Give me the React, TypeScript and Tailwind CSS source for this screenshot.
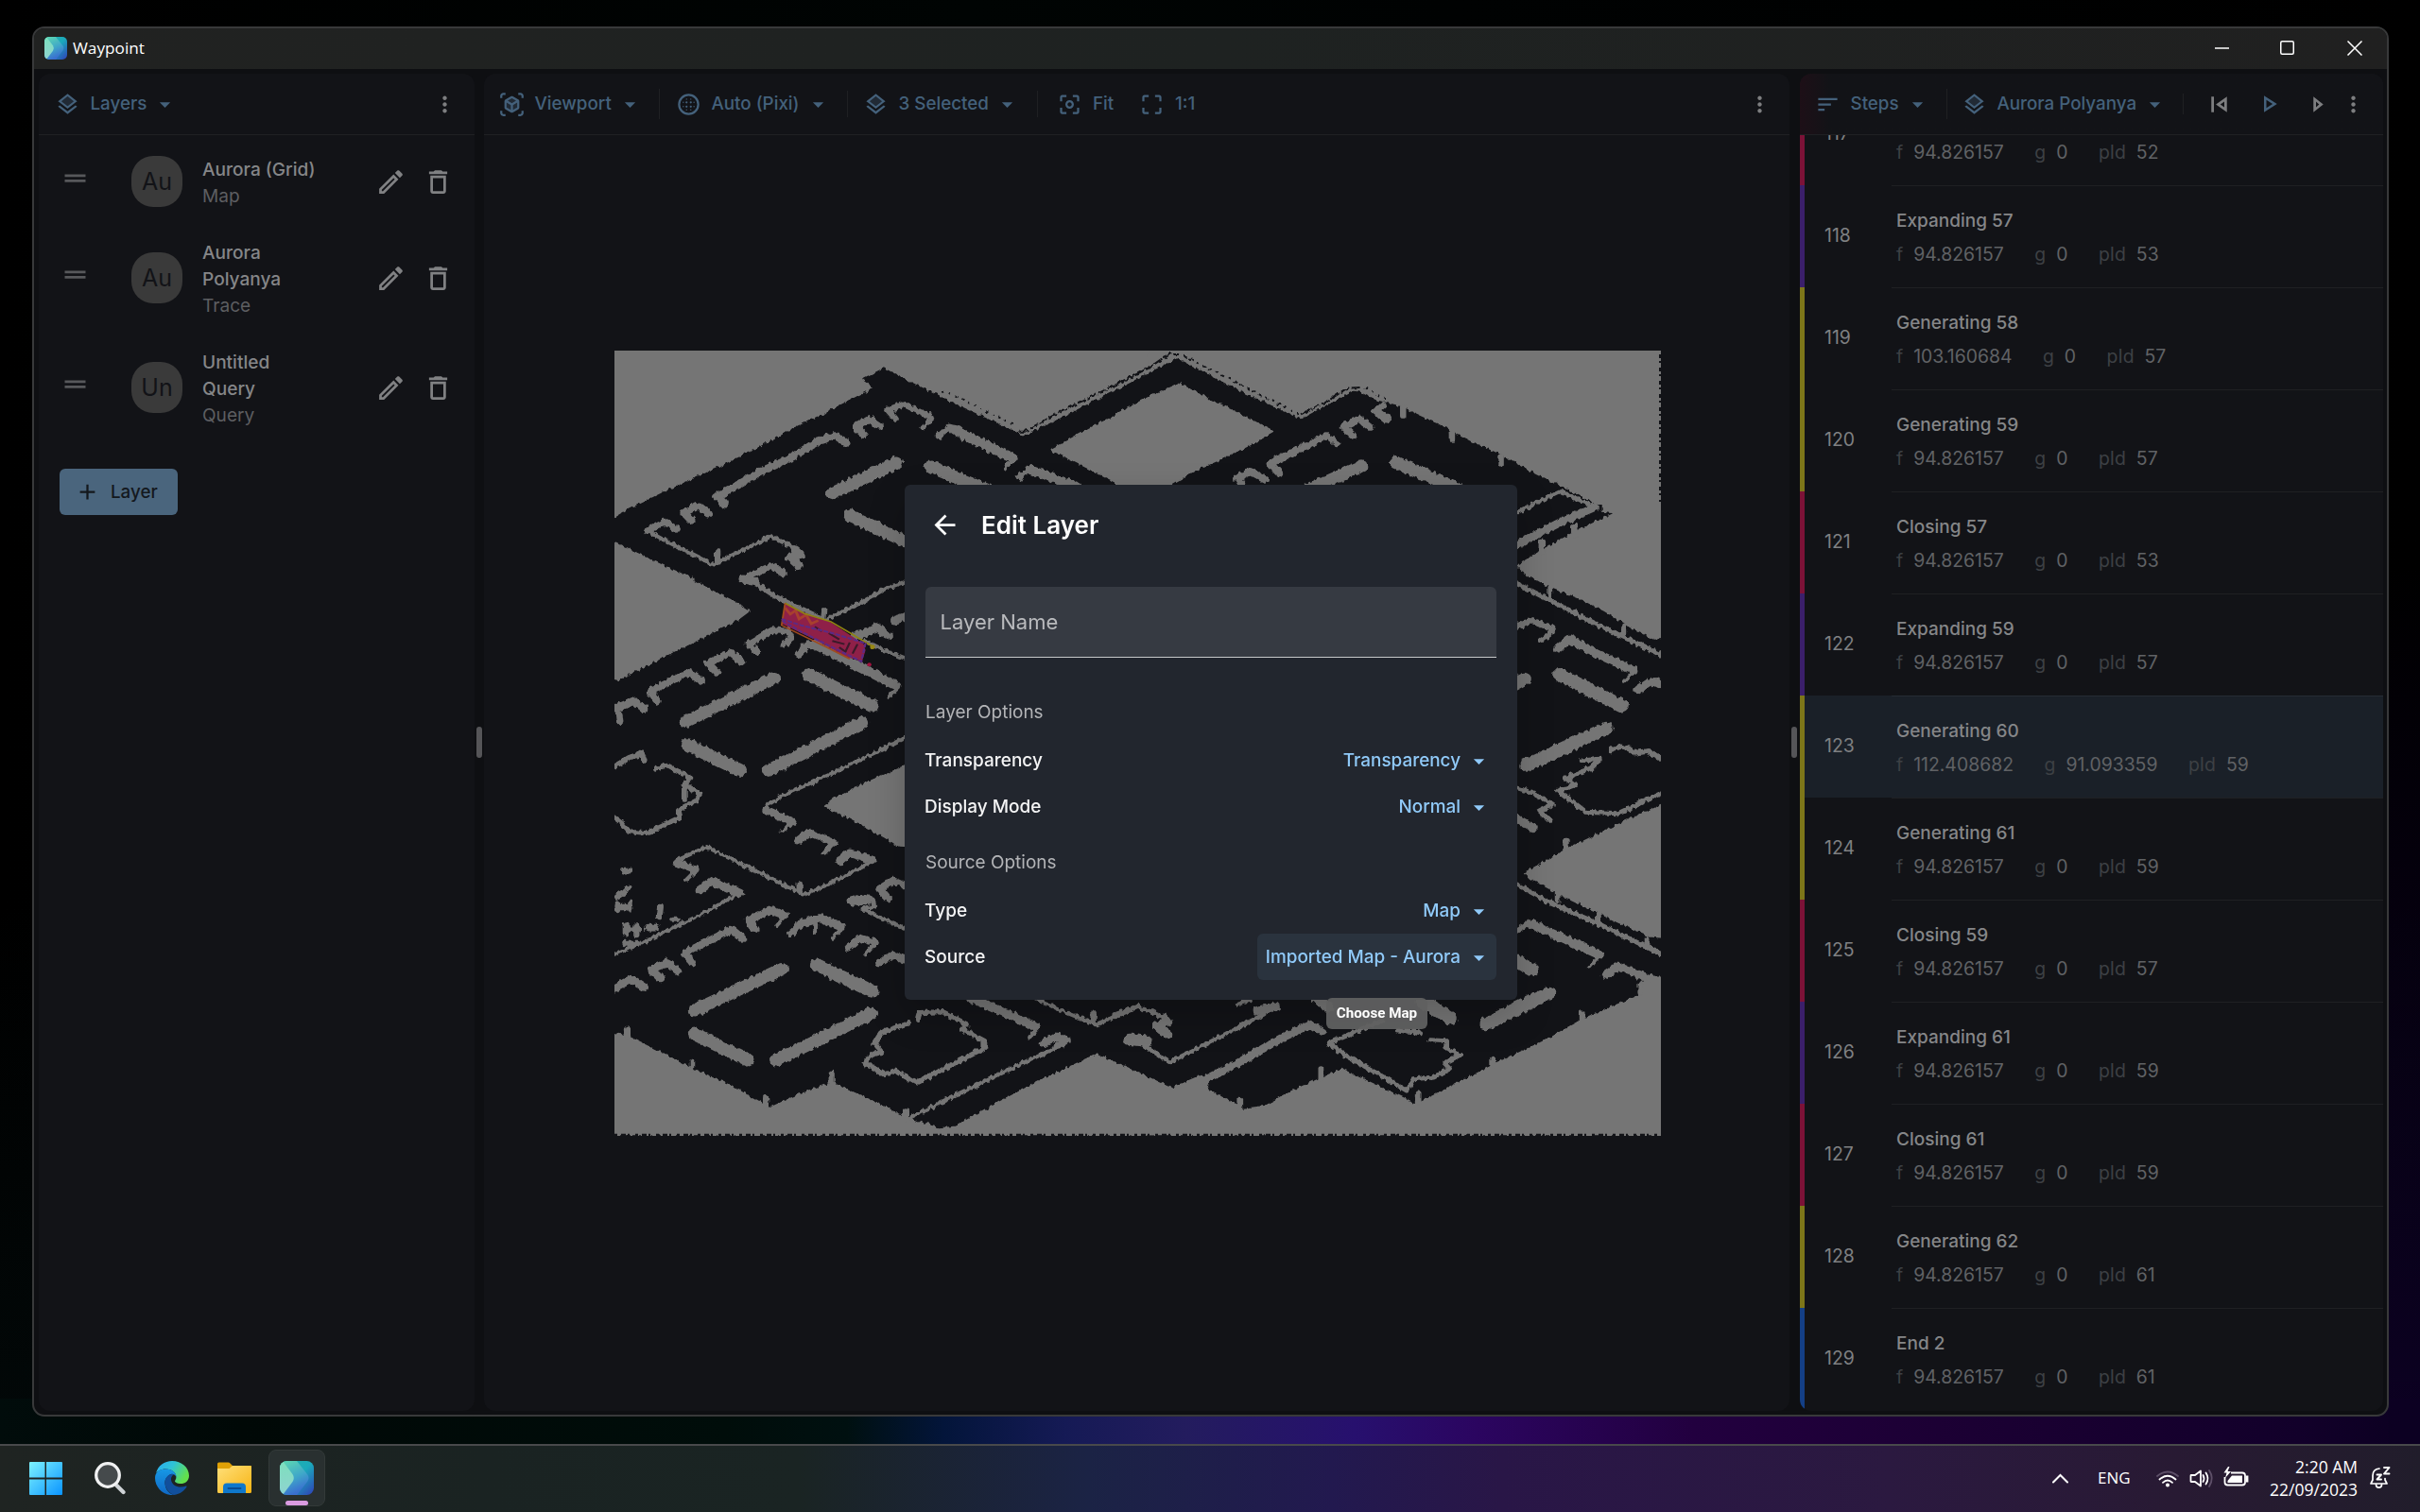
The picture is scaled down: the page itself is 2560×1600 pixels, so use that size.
import type { ReactNode } from "react";

const P = {
  layers:
    "m19.37 12.8-7.38 5.74-7.37-5.73L3 14.07l9 7 9-7zM12 2 3 9l1.63 1.27L12 16l7.36-5.73L21 9zm0 11.47L6.26 9 12 4.53 17.74 9z",
  caret: "m7 10 5 5 5-5z",
  more: "M12 8c1.1 0 2-.9 2-2s-.9-2-2-2-2 .9-2 2 .9 2 2 2zm0 2c-1.1 0-2 .9-2 2s.9 2 2 2 2-.9 2-2-.9-2-2-2zm0 6c-1.1 0-2 .9-2 2s.9 2 2 2 2-.9 2-2-.9-2-2-2z",
  viewInAr:
    "M3 4c0-.55.45-1 1-1h2V1H4C2.34 1 1 2.34 1 4v2h2V4zM3 20v-2H1v2c0 1.66 1.34 3 3 3h2v-2H4c-.55 0-1-.45-1-1zM20 1h-2v2h2c.55 0 1 .45 1 1v2h2V4c0-1.66-1.34-3-3-3zM21 20c0 .55-.45 1-1 1h-2v2h2c1.66 0 3-1.34 3-3v-2h-2v2zM19 14.87V9.13c0-.72-.38-1.38-1-1.73l-5-2.88c-.31-.18-.65-.27-1-.27s-.69.09-1 .27L6 7.39c-.62.36-1 1.02-1 1.74v5.74c0 .72.38 1.38 1 1.73l5 2.88c.31.18.65.27 1 .27s.69-.09 1-.27l5-2.88c.62-.35 1-1.01 1-1.73zm-8 2.3-4-2.3v-4.63l4 2.33v4.6zm1-6.33L8.04 8.53 12 6.25l3.96 2.28L12 10.84zm5 4.03-4 2.3v-4.6l4-2.33v4.63z",
  sort: "M3 18h6v-2H3v2zM3 6v2h18V6H3zm0 7h12v-2H3v2z",
  edit: "m14.06 9.02.92.92L5.92 19H5v-.92l9.06-9.06M17.66 3c-.25 0-.51.1-.7.29l-1.83 1.83 3.75 3.75 1.83-1.83c.39-.39.39-1.02 0-1.41l-2.34-2.34c-.2-.2-.45-.29-.71-.29zm-3.6 3.19L3 17.25V21h3.75L17.81 9.94l-3.75-3.75z",
  trash: "M16 9v10H8V9h8m-1.5-6h-5l-1 1H5v2h14V4h-3.5l-1-1zM18 7H6v12c0 1.1.9 2 2 2h8c1.1 0 2-.9 2-2V7z",
  drag: "M20 9H4v2h16V9zM4 15h16v-2H4v2z",
  add: "M19 13h-6v6h-2v-6H5v-2h6V5h2v6h6v2z",
  back: "M20 11H7.83l5.59-5.59L12 4l-8 8 8 8 1.41-1.41L7.83 13H20v-2z",
  prev: "M6 6h2v12H6zM9.5 12l8.5 6V6l-8.5 6zm6.5 2.14L12.97 12 16 9.86v4.28z",
  play: "M10 8.64 15.27 12 10 15.36V8.64M8 5v14l11-7L8 5z",
  next: "M6 18l7.6-6L6 6v12zM8 9.9L10.4 12 8 14.1V9.9z",
  corners:
    "M5 15H3v4c0 1.1.9 2 2 2h4v-2H5v-4zM5 5h4V3H5c-1.1 0-2 .9-2 2v4h2V5zM19 3h-4v2h4v4h2V5c0-1.1-.9-2-2-2zM19 19h-4v2h4c1.1 0 2-.9 2-2v-4h-2v4z",
  focusDot:
    "M12 8c-2.21 0-4 1.79-4 4s1.79 4 4 4 4-1.79 4-4-1.79-4-4-4zm0 6c-1.1 0-2-.9-2-2s.9-2 2-2 2 .9 2 2-.9 2-2 2z",
};

function Icon({ d, size = 27, className = "", children }: { d?: string; size?: number; className?: string; children?: ReactNode }) {
  return (
    <svg width={size} height={size} viewBox="0 0 24 24" fill="currentColor" fillRule="evenodd" className={`shrink-0 ${className}`}>
      {d && <path d={d} />}
      {children}
    </svg>
  );
}

const LayersIcon = () => (
  <Icon d={P.layers}>
    <path d="M6.26 9 12 13.47 17.74 9 12 4.53z" opacity=".3" />
  </Icon>
);

const BlurIcon = () => (
  <Icon>
    <circle cx="12" cy="12" r="9" fill="none" stroke="currentColor" strokeWidth="2" />
    {[10, 14].flatMap((x) => [10, 14].map((y) => <circle key={`${x}-${y}`} cx={x} cy={y} r="1" />))}
    {[
      [10, 7], [14, 7], [10, 17], [14, 17], [7, 10], [7, 14], [17, 10], [17, 14],
    ].map(([x, y]) => (
      <circle key={`o${x}-${y}`} cx={x} cy={y} r=".6" />
    ))}
  </Icon>
);

function Menu({ icon, label }: { icon: ReactNode; label: string }) {
  return (
    <div className="flex items-center text-[18.8px] font-medium text-[#44617b]">
      {icon}
      <span className="ml-[10.5px] whitespace-nowrap pt-px">{label}</span>
      <Icon d={P.caret} className="ml-[6px] mt-px" />
    </div>
  );
}

const Sep = ({ className = "h-7" }: { className?: string }) => <div className={`w-px shrink-0 bg-[#1f2023] ${className}`} />;

const layers = [
  { initials: "Au", title: ["Aurora (Grid)"], kind: "Map", h: "h-[88px]" },
  { initials: "Au", title: ["Aurora", "Polyanya"], kind: "Trace", h: "h-[116px]" },
  { initials: "Un", title: ["Untitled", "Query"], kind: "Query", h: "h-[116px]" },
];

function LayersPanel() {
  return (
    <section className="flex w-[461px] flex-col overflow-hidden rounded-xl bg-[#121317]">
      <header className="flex h-[65px] shrink-0 items-center border-b border-[#1f2023] pl-[17px]">
        <Menu icon={<LayersIcon />} label="Layers" />
        <Icon d={P.more} className="ml-auto mr-[18px] text-[#7d7e80]" />
      </header>
      <div className="flex flex-col pt-[5px]">
        {layers.map((l, i) => (
          <div key={i} className={`flex items-center pl-[22px] pr-[22px] ${l.h}`}>
            <Icon d={P.drag} size={33} className="mb-2 text-[#57585b]" />
            <div className="ml-[43px] flex size-[54px] shrink-0 items-center justify-center rounded-[23px] bg-[#3a3a3a] pt-px text-[25px] text-[#121317]">
              {l.initials}
            </div>
            <div className="ml-[21px] w-[160px] pt-[2px] text-[19.1px] leading-7">
              {l.title.map((t) => (
                <div key={t} className="whitespace-nowrap font-medium text-[#858688]">{t}</div>
              ))}
              <div className="text-[#5d5e61]">{l.kind}</div>
            </div>
            <Icon d={P.edit} size={33} className="ml-auto text-[#808183]" />
            <Icon d={P.trash} size={33} className="ml-[17px] text-[#808183]" />
          </div>
        ))}
      </div>
      <button className="ml-[22px] mt-7 flex h-[49px] w-[125px] items-center rounded-md bg-[#4a657d] pl-[16px] text-[18.8px] font-medium text-[#14181d]">
        <Icon d={P.add} />
        <span className="ml-[11px] pt-px">Layer</span>
      </button>
    </section>
  );
}

type Shape = [number, string];

/* The map is drawn in four quadrants, each with its own local grid. */
const quadrants: { t: string; areas: string[]; walls: Shape[] }[] = [
  {
    t: "translate(-10 -11) scale(.3699 .3333)",
    areas: [
      "0,0 0,580 60,540 170,480 320,405 430,345 520,290 620,235 700,190 768,150 735,122 797,88 880,135 1000,200 1198,303 1300,248 1568,98 1568,0",
      "1270,348 1400,270 1568,180 1568,470 1475,460",
      "0,625 27,640 75,665 160,710 240,750 300,790 360,822 415,860 385,885 200,990 35,1080 0,1070",
    ],
    walls: [
      [36, "652,485 832,390"], [36, "932,402 1100,480"], [36, "702,557 890,655"], [36, "232,1210 483,1073"],
      [38, "582,1062 762,1160"], [17, "830,250 808,222 855,203 925,240"], [10, "930,235 935,250 908,278"],
      [20, "740,300 718,275 755,252 783,272"], [21, "342,520 320,495 350,478 450,415 540,368 610,320 660,303 690,326"],
      [20, "247,572 226,548 266,524 296,550"], [16, "955,305 985,275 1010,283"], [28, "1000,285 1165,375"], [8, "1165,378 1142,408"],
      [16, "1185,435 1215,408"], [26, "1215,410 1350,465"], [18, "205,600 172,576 122,604"], [10, "122,605 180,640 310,712 475,622 545,662"],
      [22, "545,665 560,680 528,690 555,716"], [14, "322,672 322,700"], [20, "510,740 480,716 420,745 400,762"], [22, "395,758 430,768"],
      [12, "425,768 490,815 620,885"], [9, "630,888 730,835 800,790 870,762"], [14, "625,858 622,885"],
      [18, "435,990 410,965 480,920 525,925"], [14, "525,920 535,945 510,968"], [20, "555,995 580,967 610,965"], [26, "600,965 830,1095"],
      [8, "838,1105 812,1132"], [20, "320,1055 295,1026 358,992 390,1020"], [20, "150,1145 130,1115 240,1055 275,1082"],
      [22, "0,1180 35,1168 82,1145 110,1170"], [18, "40,1188 42,1208"], [24, "860,878 830,888"], [24, "715,940 745,930 780,913 808,938"],
      [10, "745,955 800,985 870,1015"],
    ],
  },
  {
    t: "translate(530 -11) scale(.3827 .3333)",
    areas: [
      "90,0 90,104 170,58 340,158 512,250 665,158 720,190 775,205 900,270 1000,330 1060,360 1120,400 1240,470 1325,520 1345,520 1345,545 1375,550 1300,590 1200,650 1112,712 1112,728 1200,785 1280,820 1350,860 1420,910 1490,950 1600,935 1600,0",
      "0,232 90,180 178,135 260,185 350,235 440,290 380,330 300,375 230,410 155,460 0,480",
    ],
    walls: [
      [14, "740,205 720,225 735,238"], [22, "720,225 748,250"], [20, "655,302 630,275 675,250 703,275"],
      [19, "452,422 428,392 510,345 585,303 612,328"], [20, "350,460 338,437 375,417 412,440"],
      [34, "530,475 680,400"], [36, "777,388 950,475"], [9, "1100,552 1230,480 1310,522"], [22, "1325,530 1230,578 1100,655"],
      [14, "1268,590 1268,620"], [14, "1178,640 1178,675"], [12, "1105,770 1200,825 1300,885 1400,940 1520,1005"],
      [18, "1105,912 1150,890 1205,915"], [12, "1208,915 1200,935 1178,952"], [22, "1222,980 1258,947"], [24, "1255,950 1340,1000 1430,1048"],
      [10, "1435,1050 1405,1085"], [38, "1228,1062 1398,1160"], [22, "1445,1110 1480,1083 1530,1100"], [36, "1090,1100 1130,1075"],
      [14, "930,295 930,318"], [14, "795,215 795,240"], [14, "1065,370 1065,395"], [12, "1200,788 1200,815"], [10, "1405,905 1405,935"],
    ],
  },
  {
    t: "translate(-10 409) scale(.3699 .3333)",
    areas: [
      "625,220 660,190 760,135 870,85 870,352 840,350 800,320 690,255",
      "0,935 60,945 160,1000 270,1060 360,1105 470,1175 560,1130 648,1095 750,1145 870,1210 955,1240 1000,1235 1130,1155 1250,1085 1405,1005 1568,1090 1568,1267 0,1267",
    ],
    walls: [
      [38, "237,24 385,105"], [36, "467,106 735,-45"], [36, "257,867 505,737"], [38, "607,724 762,806"], [38, "257,943 408,1025"],
      [36, "490,1026 762,877"], [14, "20,98 70,65 105,52 112,75"], [11, "145,100 180,90 245,130 225,152 272,180 262,200 210,232 215,255 120,305 70,300 50,275 20,250"],
      [10, "228,150 228,200"], [9, "870,-5 780,45 640,120 500,190 462,218"], [22, "462,232 535,268"], [9, "535,268 508,300"],
      [20, "552,328 582,302 655,335"], [12, "652,335 628,366"], [22, "670,393 700,368 765,390"], [9, "765,390 740,410 650,462 570,500 430,425 290,348 205,392"],
      [20, "205,398 258,420"], [9, "258,425 230,456"], [14, "556,465 556,490"], [24, "272,485 305,458 385,495"], [8, "385,495 280,560 130,640 20,695"],
      [22, "430,610 412,580 475,550 512,565"], [8, "515,570 490,600"], [18, "530,625 560,595"], [24, "560,592 615,575 675,602"], [9, "680,605 652,638"],
      [10, "602,595 602,620"], [20, "392,638 362,610 300,645 228,685 248,715"], [21, "160,768 132,738 178,715 208,742"],
      [22, "10,808 75,768 112,795"], [20, "695,668 730,638 772,652"], [10, "772,655 745,690"], [20, "785,718 822,692 870,712"],
      [20, "810,512 785,482 825,455 870,478"], [30, "710,520 750,515"], [10, "740,525 765,515 770,535 735,545 800,580 880,618"],
      [14, "52,425 68,425"], [18, "35,505 52,495"], [12, "62,480 72,476"], [16, "35,540 70,540"], [14, "35,525 35,550"], [12, "70,525 70,550"],
      [16, "60,595 60,625"], [14, "60,610 95,610"], [14, "90,600 90,628"], [16, "158,540 155,570"], [12, "192,580 208,580"], [20, "125,605 145,605"],
      [18, "60,655 95,655"], [10, "870,1210 950,1165 1100,1085 1290,985"], [22, "1255,972 1290,950 1320,962 1295,980"],
      [13, "895,895 900,875 965,872 1035,912 1022,928 1085,965 1085,988 1000,1035 890,1097 830,1060 800,1072 745,1035 760,1010 790,1000 770,972 790,938 868,908"],
      [26, "1050,830 1230,918"], [9, "1240,920 1215,952"], [10, "1235,832 1320,875 1405,912 1525,857 1570,870"], [12, "1398,875 1398,905"],
      [14, "65,925 65,950"], [12, "250,1030 250,1055"], [14, "460,1145 460,1170"], [14, "648,1070 648,1100"], [14, "860,1188 860,1212"],
    ],
  },
  {
    t: "translate(530 409) scale(.3827 .3333)",
    areas: [
      "0,1030 155,1112 240,1070 262,1120 355,1178 410,1170 500,1115 625,1052 730,1108 830,1162 940,1100 1060,1030 1180,965 1300,890 1445,818 1445,785 1470,758 1600,755 1600,1267 0,1267",
      "1128,430 1160,410 1245,355 1390,275 1600,165 1600,645 1480,635 1390,590 1260,520 1145,450",
    ],
    walls: [
      [10, "0,880 60,855 130,888"], [22, "135,890 145,905 112,915 145,945"], [34, "40,960 85,965"], [10, "80,980 150,1032 250,975 410,880"],
      [26, "395,868 440,856"], [9, "340,848 370,835"], [22, "240,1092 330,1040 460,955 540,912 572,936"],
      [12, "735,900 590,972 635,1010 720,1065 805,1122 825,1085 880,1080 925,1052 910,1035 950,1010 915,985 915,965 870,962"],
      [38, "850,840 925,892"], [26, "555,830 590,860"], [12, "780,930 842,938"], [38, "1025,910 1198,812"], [36, "1100,705 1150,738"],
      [11, "1105,465 1200,525 1330,590 1520,695"], [14, "1108,615 1145,588"], [24, "1145,590 1240,640 1335,690"], [8, "1338,695 1312,730"],
      [22, "1355,755 1388,728 1475,765"], [10, "1450,785 1450,810"], [38, "1137,90 1355,-28"], [14, "1370,40 1400,28 1440,50 1470,45 1520,75"],
      [12, "1290,75 1340,70 1315,98 1245,130 1270,152 1225,170 1300,238 1390,242 1440,215 1520,172"], [10, "1105,160 1150,175 1208,212"],
      [14, "1205,215 1172,235 1200,264"], [22, "1105,255 1155,288"], [14, "1245,332 1245,360"], [12, "1222,495 1222,520"], [12, "1335,562 1335,590"],
      [12, "1470,640 1470,668"], [12, "1043,1018 1043,1045"], [12, "1290,875 1290,900"], [12, "838,1130 838,1160"], [12, "568,1052 568,1085"],
      [12, "343,1148 343,1180"],
    ],
  },
];

const fringe: [string, string, string][] = [
  [quadrants[0].t, "965,163 1040,195 1170,270", "6 14"],
  [quadrants[0].t, "1185,290 1200,290 1300,228 1460,142 1568,78", "26 6"],
  [quadrants[1].t, "0,143 100,82 150,42 178,42", "26 6"],
  [quadrants[1].t, "190,50 300,115 420,185 510,238", "8 12"],
  [quadrants[1].t, "515,235 590,190 640,152 680,150", "26 6"],
  [quadrants[1].t, "690,152 750,190", "6 14"],
  [quadrants[1].t, "1250,475 1310,515", "6 14"],
];

function MapView() {
  return (
    <svg width="1107" height="831" viewBox="0 0 1107 831" className="block overflow-hidden">
      <defs>
        <filter id="rough" filterUnits="userSpaceOnUse" x="-20" y="-20" width="1150" height="870" colorInterpolationFilters="sRGB">
          <feTurbulence type="fractalNoise" baseFrequency="0.3 0.14" numOctaves="1" seed="4" result="n" />
          <feDisplacementMap in="SourceGraphic" in2="n" scale="6.5" xChannelSelector="R" yChannelSelector="G" />
        </filter>
      </defs>
      <g filter="url(#rough)">
        {quadrants.map((q) => (
          <g key={q.t} transform={q.t} fill="#757575" stroke="none">
            {q.areas.map((a) => (
              <polygon key={a} points={a} />
            ))}
            {q.walls.map(([w, p]) => (
              <polyline key={p} points={p} fill="none" stroke="#757575" strokeWidth={w + 3} strokeLinecap="round" strokeLinejoin="round" />
            ))}
          </g>
        ))}
        {fringe.map(([t, p, dash]) => (
          <polyline key={p} transform={t} points={p} fill="none" stroke="#121317" strokeWidth="6" strokeDasharray={dash} />
        ))}
      </g>
      <line x1="1106" y1="4" x2="1106" y2="160" stroke="#121317" strokeWidth="2" strokeDasharray="4 3 2 5" />
      <line x1="0" y1="830" x2="1107" y2="830" stroke="#121317" strokeWidth="2.5" strokeDasharray="3 4 5 2 2 6" />
      {/* search trace */}
      <g transform={quadrants[0].t}>
        <polygon points="515,835 570,865 645,895 740,965 745,985 735,1020 690,1005 600,950 505,900" fill="#8f2048" />
        <polyline points="515,850 530,870 545,858 555,885 575,872 590,900 610,890" fill="none" stroke="#a8402e" strokeWidth="8" />
        <path d="M640 930l30 20M650 955l35 10M700 960l-12 28M722 965l-14 30M600 910l20 14M670 975l20 16" stroke="#3a1a2a" strokeWidth="6" />
        <polyline points="515,835 570,868 645,893 770,975" fill="none" stroke="#8f8312" strokeWidth="5" />
        <polyline points="515,835 505,905 560,935 640,978 700,1012" fill="none" stroke="#a04a1e" strokeWidth="5" />
        <polyline points="505,885 560,905 650,930 745,962 733,1020 650,975 560,925 505,890" fill="none" stroke="#5b2a86" strokeWidth="6" strokeDasharray="14 4" />
        <circle cx="765" cy="974" r="7" fill="#9a8a14" />
        <circle cx="756" cy="1030" r="6" fill="#a3123f" />
      </g>
    </svg>
  );
}

function ViewportPanel() {
  return (
    <section className="flex w-[1381px] flex-col overflow-hidden rounded-xl bg-[#121317]">
      <header className="flex h-[65px] shrink-0 items-center border-b border-[#1f2023]">
        <div className="w-[185px] pl-[16px]">
          <Menu
            icon={
              <Icon d={P.viewInAr}>
                <path d="M12 5 6 8.500v7L12 19l6-3.500v-7z" opacity=".3" />
              </Icon>
            }
            label="Viewport"
          />
        </div>
        <Sep className="h-8" />
        <div className="w-[198px] pl-[17px]">
          <Menu icon={<BlurIcon />} label="Auto (Pixi)" />
        </div>
        <Sep />
        <div className="w-[200px] pl-[16px]">
          <Menu icon={<LayersIcon />} label="3 Selected" />
        </div>
        <Sep />
        <div className="flex items-center pl-[20px] text-[18.8px] font-medium text-[#44617b]">
          <Icon d={P.corners + P.focusDot} />
          <span className="ml-[11px] w-[24px] pt-px">Fit</span>
          <Icon d={P.corners} className="ml-[25px]" />
          <span className="ml-[11px] pt-px">1:1</span>
        </div>
        <Icon d={P.more} className="ml-auto mr-[18px] text-[#7d7e80]" />
      </header>
      <div className="pl-[138px] pt-[228px]">
        <MapView />
      </div>
    </section>
  );
}

const C = "bg-[#7c1237]";
const V = "bg-[#3b1f6b]";
const Y = "bg-[#7d7619]";
const steps: [number, string, string, string, string, string][] = [
  [117, "", "94.826157", "0", "52", C],
  [118, "Expanding 57", "94.826157", "0", "53", V],
  [119, "Generating 58", "103.160684", "0", "57", Y],
  [120, "Generating 59", "94.826157", "0", "57", Y],
  [121, "Closing 57", "94.826157", "0", "53", C],
  [122, "Expanding 59", "94.826157", "0", "57", V],
  [123, "Generating 60", "112.408682", "91.093359", "59", Y],
  [124, "Generating 61", "94.826157", "0", "59", Y],
  [125, "Closing 59", "94.826157", "0", "57", C],
  [126, "Expanding 61", "94.826157", "0", "59", V],
  [127, "Closing 61", "94.826157", "0", "59", C],
  [128, "Generating 62", "94.826157", "0", "61", Y],
  [129, "End 2", "94.826157", "0", "61", "bg-[#143f86]"],
];

function Prop({ k, v }: { k: string; v: string }) {
  return (
    <span className="flex gap-[11px]">
      <span className="text-[#3d4044]">{k}</span>
      <span className="text-[#606265]">{v}</span>
    </span>
  );
}

function StepsPanel() {
  return (
    <section className="flex w-[617px] flex-col overflow-hidden rounded-xl bg-[#121317]">
      <header className="flex h-[65px] shrink-0 items-center border-b border-[#1f2023] bg-linear-to-r from-[#1d0f17] to-[#121317] to-5%">
        <div className="w-[155px] pl-[16px]">
          <Menu icon={<Icon d={P.sort} />} label="Steps" />
        </div>
        <Sep className="h-8" />
        <div className="w-[249px] pl-[15px]">
          <Menu icon={<LayersIcon />} label="Aurora Polyanya" />
        </div>
        <Sep className="h-[22px]" />
        <Icon d={P.prev} size={33} className="ml-[21px] text-[#7d7e80]" />
        <Icon d={P.play} size={30} className="ml-[21px] text-[#44617b]" />
        <Icon d={P.next} size={33} className="ml-[24px] text-[#7d7e80]" />
        <Icon d={P.more} className="ml-[4px] text-[#7d7e80]" />
      </header>
      <div className="min-h-0 flex-1 overflow-hidden">
        <div className="-mt-[55px] flex flex-col">
          {steps.map(([n, title, f, g, pid, bar]) => (
            <div key={n} className={`flex h-[108px] shrink-0 ${n === 123 ? "bg-[#1a2028]" : ""}`}>
              <div className={`w-[5px] ${bar}`} />
              <div className="flex w-[92px] items-center pl-[21px] text-[19.4px] text-[#7f8082]">{n}</div>
              <div className={`flex flex-1 flex-col border-t pl-[5px] pt-[23px] ${n === 123 ? "border-[#262c34]" : "border-[#1f2023]"}`}>
                <div className="h-7 text-[19px] font-medium leading-7 text-[#858688]">{title}</div>
                <div className="mt-[7px] flex gap-[32.5px] text-[19.4px] leading-7">
                  <Prop k="f" v={f} />
                  <Prop k="g" v={g} />
                  <Prop k="pId" v={pid} />
                </div>
              </div>
            </div>
          ))}
        </div>
      </div>
    </section>
  );
}

const Grip = ({ className }: { className: string }) => (
  <div className={`flex items-center ${className}`}>
    <div className="h-[33px] w-[6px] rounded-full bg-[#555558]" />
  </div>
);

function Logo({ size }: { size: number }) {
  return (
    <svg width={size} height={size} viewBox="0 0 36 36" className="shrink-0">
      <defs>
        <linearGradient id="lg1" x1="0" y1="0" x2="1" y2="1">
          <stop offset="0" stopColor="#25b3a9" />
          <stop offset=".5" stopColor="#1ba9bb" />
          <stop offset="1" stopColor="#2f3fb8" />
        </linearGradient>
        <linearGradient id="lg2" x1="0" y1="0" x2="0.4" y2="1">
          <stop offset="0" stopColor="#5fdcb0" />
          <stop offset=".6" stopColor="#3fa6c9" />
          <stop offset="1" stopColor="#3a6fd0" />
        </linearGradient>
        <linearGradient id="lg3" x1="0" y1="0" x2="0" y2="1">
          <stop offset="0" stopColor="#7de0bd" />
          <stop offset="1" stopColor="#8fd3d0" />
        </linearGradient>
        <clipPath id="lgc">
          <rect width="36" height="36" rx="7.500" />
        </clipPath>
      </defs>
      <g clipPath="url(#lgc)">
        <rect width="36" height="36" fill="url(#lg1)" />
        <path d="M0 0h18l11 14q3 4 0 8L18 36H0z" fill="url(#lg2)" />
        <path d="M0 0h3l10.500 14q2.500 4 0 8L3 36H0z" fill="url(#lg3)" />
      </g>
    </svg>
  );
}

function SelectRow({ label, value, active }: { label: string; value: string; active?: boolean }) {
  return (
    <div className="flex h-[49px] items-center justify-between">
      <span className="pt-px text-[19px] font-medium text-[#f4f4f5]">{label}</span>
      <span className={`flex h-[49px] items-center rounded-md pl-[9px] pr-[5px] text-[18.9px] font-medium text-[#90caf9] ${active ? "bg-[#2a333e]" : ""}`}>
        <span className="pt-px">{value}</span>
        <Icon d={P.caret} className="ml-[6px] mt-px" />
      </span>
    </div>
  );
}

function EditLayerDialog() {
  return (
    <div className="absolute left-[957px] top-[513px] flex h-[545px] w-[648px] flex-col rounded-md bg-[#22262e] px-[22px] shadow-[0_16px_40px_rgba(0,0,0,0.2)]">
      <div className="flex h-[84px] items-center pl-[4px] text-white">
        <Icon d={P.back} size={33} />
        <span className="ml-[22px] text-[26px] font-semibold">Edit Layer</span>
      </div>
      <div className="mt-6 flex h-[75px] items-center rounded-t-md border-b-[1.5px] border-[#c8c9cb] bg-[#363a42] pl-[15.5px] text-[22px] text-[#b9babd]">Layer Name</div>
      <div className="mt-[44px] text-[19px] leading-7 text-[#b3b4b7]">Layer Options</div>
      <div className="mt-[12px] -ml-px">
        <SelectRow label="Transparency" value="Transparency" />
        <SelectRow label="Display Mode" value="Normal" />
      </div>
      <div className="mt-[21px] text-[19px] leading-7 text-[#b3b4b7]">Source Options</div>
      <div className="mt-[12px] -ml-px">
        <SelectRow label="Type" value="Map" />
        <SelectRow label="Source" value="Imported Map - Aurora" active />
      </div>
    </div>
  );
}

function AppWindow() {
  return (
    <div className="absolute left-[34px] top-[28px] flex h-[1471px] w-[2493px] flex-col overflow-hidden rounded-[13px] border-2 border-[#38393a] bg-[#0e0f12]">
      <div className="flex h-[43px] shrink-0 items-center bg-linear-to-r from-[#212221] via-[#1e2221] to-[#202020] pb-px pl-[11px] text-white">
        <Logo size={24} />
        <span className="ml-[6px] pb-px font-['Open_Sans',sans-serif] text-[17.2px]">Waypoint</span>
        <svg width="156" height="16" viewBox="0 0 156 16" className="ml-auto mr-[26px]" fill="none" stroke="white" strokeWidth="1.500">
          <path d="M0 8h15" />
          <rect x="69.750" y=".75" width="13.500" height="13.500" rx="1.500" />
          <path d="M140.500.5l15 15M155.500.5l-15 15" />
        </svg>
      </div>
      <div className="flex min-h-0 flex-1 pb-[4px] pl-[5px] pt-[5px]">
        <LayersPanel />
        <Grip className="w-[10px] pl-[2px]" />
        <ViewportPanel />
        <Grip className="w-[11px] pl-[2px]" />
        <StepsPanel />
      </div>
    </div>
  );
}

function Taskbar() {
  return (
    <div className="absolute bottom-0 left-0 flex h-[72px] w-full items-center border-t-2 border-[#48494b] bg-[linear-gradient(90deg,#1f2422_0%,#1a2322_20%,#1a2423_33%,#1b2345_45%,#22194f_55%,#291647_62%,#2b1940_78%,#281a33_90%,#211d2b_100%)] pb-[2px] pl-[31px] font-['Open_Sans',sans-serif] text-white">
      <svg width="35" height="35" viewBox="0 0 35 35">
        <defs>
          <linearGradient id="win" x1="0" y1="0" x2="35" y2="35" gradientUnits="userSpaceOnUse">
            <stop stopColor="#7df3ff" />
            <stop offset="1" stopColor="#0a94ff" />
          </linearGradient>
        </defs>
        <path d="M1 0h15.500v16.500H0V1q0-1 1-1zM18 0h16q1 0 1 1v15.500H18zM0 18.500h16.500V35H1q-1 0-1-1zM18 18.500h17V34q0 1-1 1H18z" fill="url(#win)" />
      </svg>
      <svg width="33" height="35" viewBox="0 0 33 35" className="ml-[34px]">
        <path d="M23.500 25l7 7" stroke="#cfd3d6" strokeWidth="4.200" strokeLinecap="round" />
        <circle cx="14" cy="14" r="12.300" fill="#454a4c" stroke="#f0f1f2" strokeWidth="3.300" />
      </svg>
      <svg width="36" height="36" viewBox="0 0 36 36" className="ml-[31px]">
        <defs>
          <linearGradient id="e1" x1="0" y1="0" x2="1" y2=".45">
            <stop stopColor="#2aa9f0" />
            <stop offset=".5" stopColor="#2fc3d6" />
            <stop offset="1" stopColor="#62e04c" />
          </linearGradient>
          <linearGradient id="e2" x1="0" y1="0" x2="0" y2="1">
            <stop stopColor="#1798e5" />
            <stop offset="1" stopColor="#0f67c4" />
          </linearGradient>
        </defs>
        <path d="M1 13C3 5 10 0 18 0c10 0 18 7 18 15.500 0 6-4.500 8.500-8.500 8.500-4.500 0-6.500-1.600-6.500-2.700 0-.9 1.400-1.600 1.400-4.300C22.400 12 17 8.500 11.500 8.500 6 8.500 2.500 11 1 13z" fill="url(#e1)" />
        <path d="M0 18C0 11.500 5.500 8.500 11.500 8.500c6.500 0 11 4 11 8.500-1-2.500-3-3.200-4.500-3.200-3 .2-8 4.200-7.500 10C11 31 16 35.500 20 36 9 37.200 0 28 0 18z" fill="url(#e2)" />
        <path d="M18 13.800c-4 .7-8 4.500-7.500 10C11 30.500 16.500 35 20 36c6.500-.8 11.500-5 13.500-8.800.3-.6-.2-.9-.8-.7-7.700 3-14.200-.5-15.500-5.500-.7-3 .3-5.500 2.800-6.700z" fill="#114f9c" />
      </svg>
      <svg width="36" height="34" viewBox="0 0 36 34" className="ml-[30px]">
        <defs>
          <linearGradient id="fd" x1="0" y1="0" x2="1" y2="1">
            <stop stopColor="#ffe07a" />
            <stop offset="1" stopColor="#f7b414" />
          </linearGradient>
        </defs>
        <path d="M0 2q0-1.500 1.500-1.500h10q1 0 2 1l2.500 2.500H36v6H0z" fill="#e0a106" />
        <path d="M0 7h12.500L16 4h18.500Q36 4 36 5.500v26q0 1.500-1.500 1.500h-33Q0 33 0 31.500z" fill="url(#fd)" />
        <path d="M6 33v-6.500Q6 22.500 10 22.500h16q4 0 4 4V33z" fill="#0f78cc" />
        <path d="M11.500 28h13" stroke="#0a4c92" strokeWidth="1.800" strokeLinecap="round" />
      </svg>
      <div className="relative ml-[18px] flex size-[60px] items-center justify-center rounded-lg border-[1.5px] border-[#333a39] bg-[#293030]">
        <Logo size={36} />
        <div className="absolute bottom-0 h-[5px] w-6 rounded-full bg-[#d99be0]" />
      </div>
      <div className="ml-auto flex items-center">
        <svg width="17" height="11" viewBox="0 0 17 11" fill="none" stroke="white" strokeWidth="2">
          <path d="M1 9.500 8.500 2 16 9.500" strokeLinecap="round" />
        </svg>
        <span className="ml-[31px] w-[36px] text-[17px]">ENG</span>
        <svg width="100" height="30" viewBox="0 0 100 30" fill="none" stroke="white" strokeWidth="1.800" className="ml-[25px]">
          <path d="M2 13q11-9 22 0" stroke="#5d4f68" strokeLinecap="round" />
          <path d="M4.500 16.500q8.500-7.500 17 0M8 19.800q5-4.500 10 0" strokeLinecap="round" />
          <circle cx="13" cy="22.500" r="2" fill="white" stroke="none" />
          <path d="M38 12h4l6-4.500v16L42 19h-4q-.5 0-.5-.5v-6q0-.5.5-.5z" strokeLinejoin="round" />
          <path d="M50.500 12q2 3.500 0 7M53.500 9.500q4 6 0 12" strokeLinecap="round" />
          <path d="M57 7q5.500 8 0 17" stroke="#5d4f68" strokeLinecap="round" />
          <path d="M80 9.500h12q3 0 3 3v7q0 3-3 3H76.500q-3 0-3-3V14" />
          <path d="M81 12.500h11v7.500H76.500V18z" fill="white" stroke="none" />
          <path d="M96 13.500h1.500v5H96" fill="white" />
          <path d="M77 3l-4.500 6.500h3L74 15l6-7h-3.500L78.500 3z" fill="white" stroke="none" />
        </svg>
        <div className="ml-[21px] flex w-[93px] flex-col items-end text-[17.5px] leading-[24px]">
          <span>2:20 AM</span>
          <span>22/09/2023</span>
        </div>
        <svg width="24" height="26" viewBox="0 0 24 26" fill="none" stroke="white" strokeWidth="1.700" className="ml-[12px] mr-[30px]" strokeLinejoin="round" strokeLinecap="round">
          <path d="M11 3C6.500 3.500 4 6.500 4 10.500V15l-2 4h17l-2-4v-1.500M7.500 20q0 3.200 3 3.200t3-3.200" />
          <path d="M8.500 9.500h4.500l-4.500 5H13M16 2h5.500L16 8.500h5.500" strokeWidth="1.900" />
        </svg>
      </div>
    </div>
  );
}

export default function App() {
  return (
    <div className="relative h-[1600px] w-[2560px] overflow-hidden bg-[linear-gradient(180deg,transparent_60%,#020808_95%),linear-gradient(90deg,#000_0%,#000403_40%,#000202_60%,#000_100%)] font-['Inter',sans-serif]">
      <div className="absolute inset-x-0 bottom-0 top-[1480px] bg-[linear-gradient(90deg,#010c0b_0%,#000806_10%,#000d0a_30%,#001010_35%,#03153a_39%,#151a55_44%,#231c5e_49%,#27106e_56%,#2b0560_61%,#22003f_70%,#1c0034_80%,#12002a_95%,#0b0020_100%)]" />
      <div className="absolute right-0 top-[600px] h-[928px] w-[33px] bg-linear-to-b from-transparent to-[#0c0022]" />
      <AppWindow />
      <EditLayerDialog />
      <div className="absolute left-[1403px] top-[1056px] flex h-[33px] w-[107px] items-center justify-center rounded-md bg-[#606060]/95 font-['Roboto',sans-serif] text-[15.2px] font-bold text-white">
        Choose Map
      </div>
      <Taskbar />
    </div>
  );
}
